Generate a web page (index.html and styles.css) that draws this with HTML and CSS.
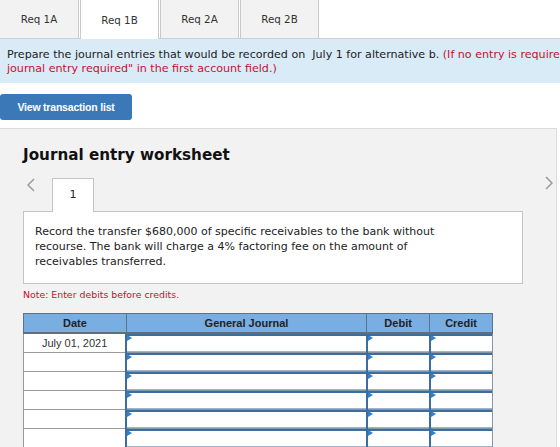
FILE: index.html
```html
<!DOCTYPE html>
<html lang="en">
  <head>
    <meta charset="UTF-8" />
    <title>Journal Entry</title>
    <link rel="stylesheet" href="styles.css">
  </head>
  <body>
    <div class="page">
      <div class="tabs">
        <div class="tab">Req 1A</div>
        <div class="tab active">Req 1B</div>
        <div class="tab">Req 2A</div>
        <div class="tab">Req 2B</div>
      </div>

      <div class="instructions">
        Prepare the journal entries that would be recorded on &nbsp;July 1 for alternative b.
        <span class="red">(If no entry is required for a transaction/event, select "No<br>journal entry required" in the first account field.)</span>
      </div>

      <button class="btn-list">View transaction list</button>

      <div class="worksheet">
        <h2>Journal entry worksheet</h2>

        <div class="nav">
          <span class="chev">
            <svg width="8" height="14" viewBox="0 0 8 14"><polyline points="7,1 1,7 7,13" fill="none" stroke="#9a9a9a" stroke-width="1.5" /></svg>
          </span>
          <div class="step">1</div>
          <span class="chev right">
            <svg width="8" height="14" viewBox="0 0 8 14"><polyline points="1,1 7,7 1,13" fill="none" stroke="#9a9a9a" stroke-width="1.5" /></svg>
          </span>
        </div>

        <div class="task">
          <p>Record the transfer $680,000 of specific receivables to the bank without
          recourse. The bank will charge a 4% factoring fee on the amount of
          receivables transferred.</p>
        </div>

        <p class="note">Note: Enter debits before credits.</p>

        <table class="journal">
          <thead>
            <tr>
              <th class="c-date">Date</th>
              <th class="c-acct">General Journal</th>
              <th class="c-num">Debit</th>
              <th class="c-num">Credit</th>
            </tr>
          </thead>
          <tbody>
            <tr>
              <td class="date">July 01, 2021</td>
              <td class="in"><div class="field"></div></td>
              <td class="in"><div class="field"></div></td>
              <td class="in"><div class="field"></div></td>
            </tr>
            <tr>
              <td class="date"></td>
              <td class="in"><div class="field"></div></td>
              <td class="in"><div class="field"></div></td>
              <td class="in"><div class="field"></div></td>
            </tr>
            <tr>
              <td class="date"></td>
              <td class="in"><div class="field"></div></td>
              <td class="in"><div class="field"></div></td>
              <td class="in"><div class="field"></div></td>
            </tr>
            <tr>
              <td class="date"></td>
              <td class="in"><div class="field"></div></td>
              <td class="in"><div class="field"></div></td>
              <td class="in"><div class="field"></div></td>
            </tr>
            <tr>
              <td class="date"></td>
              <td class="in"><div class="field"></div></td>
              <td class="in"><div class="field"></div></td>
              <td class="in"><div class="field"></div></td>
            </tr>
            <tr>
              <td class="date"></td>
              <td class="in"><div class="field"></div></td>
              <td class="in"><div class="field"></div></td>
              <td class="in"><div class="field"></div></td>
            </tr>
          </tbody>
        </table>
      </div>
    </div>
  </body>
</html>
```

FILE: styles.css
```css
html,
body {
  margin: 0;
  padding: 0;
  overflow: hidden;
  background-color: #fff;
}

body {
  font-family: "DejaVu Sans", Verdana, sans-serif;
  color: #222;
}

.page {
  width: 840px;
}

.tabs {
  display: flex;
  height: 38px;
  border-bottom: 1px solid #cfcfcf;
}

.tab {
  width: 77px;
  height: 38px;
  margin-right: 1px;
  background-color: #f2f2f2;
  border-left: 1px solid #c9c9c9;
  border-right: 1px solid #c9c9c9;
  font-size: 10.3px;
  color: #333;
  display: flex;
  align-items: center;
  justify-content: center;
}

.tab:first-child {
  border-left: none;
  width: 78px;
}

.tab.active {
  background-color: #fff;
  height: 39px;
  margin-bottom: -1px;
}

.instructions {
  background-color: #d9ebf7;
  padding: 9px 6px 7px 7px;
  font-size: 11.1px;
  line-height: 14px;
}

.red {
  color: #c8102e;
}

.btn-list {
  display: block;
  margin-top: 11px;
  width: 132px;
  height: 26px;
  padding: 0;
  border: none;
  border-radius: 3px;
  background-color: #3a78b8;
  color: #fff;
  font-family: "Liberation Sans", Arial, sans-serif;
  font-weight: bold;
  font-size: 10.5px;
  letter-spacing: -0.2px;
}

.worksheet {
  width: 557px;
  box-sizing: border-box;
  margin-top: 8px;
  min-height: 340px;
  background-color: #f2f2f2;
  border: 1px solid #dcdcdc;
  border-left: none;
  padding: 17px 0 0 23px;
}

.worksheet h2 {
  margin: 0;
  font-size: 15.2px;
  line-height: 18px;
  font-weight: bold;
  color: #111;
}

.nav {
  display: flex;
  align-items: flex-end;
  margin-top: 13px;
  width: 535px;
  height: 34px;
}

.chev {
  display: flex;
  width: 29px;
  height: 34px;
  align-items: center;
  padding-left: 4px;
  box-sizing: border-box;
  margin-bottom: 9px;
}

.chev.right {
  margin-left: auto;
  width: auto;
  padding-left: 0;
  padding-right: 5px;
  margin-bottom: 11px;
}

.step {
  width: 42px;
  height: 34px;
  box-sizing: border-box;
  background-color: #fff;
  border: 1px solid #c4c4c4;
  border-bottom: none;
  margin-bottom: -1px;
  position: relative;
  z-index: 1;
  font-size: 11px;
  display: flex;
  align-items: center;
  justify-content: center;
  padding-bottom: 3px;
}

.task {
  width: 500px;
  box-sizing: border-box;
  background-color: #fff;
  border: 1px solid #c4c4c4;
  padding: 12px 12px 14px 11px;
  font-size: 11px;
  line-height: 15px;
  color: #222;
}

.task p {
  margin: 0;
  max-width: 410px;
}

.note {
  margin: 5px 0 0 0;
  font-size: 9.4px;
  line-height: 12px;
  color: #c8102e;
}

.journal {
  margin-top: 12px;
  border-collapse: collapse;
  width: 470px;
  font-family: "Liberation Sans", Arial, sans-serif;
  font-size: 11px;
  background-color: #fff;
}

.journal th {
  background-color: #78aee2;
  border: 1px solid #5f7386;
  border-bottom: 2px solid #5f6f7e;
  height: 18px;
  padding: 0;
  font-weight: bold;
  color: #222;
}

.c-date {
  width: 102px;
}

.c-acct {
  width: 240px;
}

.c-num {
  width: 62px;
}

.journal td {
  height: 17px;
  padding: 0;
}

.journal td.date {
  border: 1px solid #9a9a9a;
  text-align: center;
  color: #333;
}

.journal td.in {
  border: 1px solid #8596a8;
  border-left: 2px solid #3d6c9e;
}

.field {
  position: relative;
  height: 15px;
  border-top: 2px solid #3d6c9e;
  border-bottom: 1px solid #9fb4cc;
}

.field::before {
  content: "";
  position: absolute;
  top: -1px;
  left: 0;
  border-left: 5px solid #2f7fd4;
  border-top: 3px solid transparent;
  border-bottom: 3px solid transparent;
}
```
